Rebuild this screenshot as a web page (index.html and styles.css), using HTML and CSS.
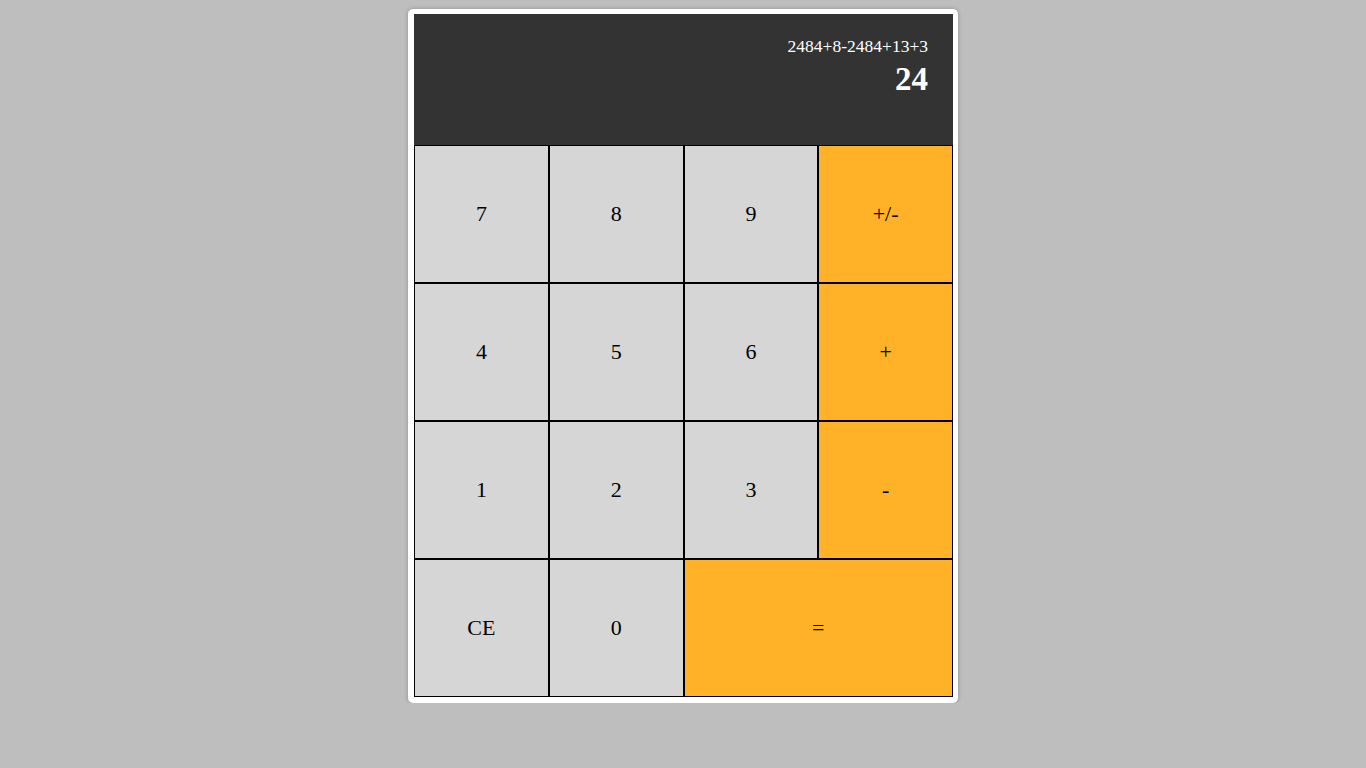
FILE: index.html
```html
<!DOCTYPE html>
<html>
<head>
<meta charset="utf-8">
<title>Calculator</title>
<link rel="stylesheet" href="styles.css">
</head>
<body>
<div class="calculator">
  <div class="display">
    <div class="expression">2484+8-2484+13+3</div>
    <div class="result">24</div>
  </div>
  <div class="keys">
    <button class="key">7</button>
    <button class="key">8</button>
    <button class="key">9</button>
    <button class="key op">+/-</button>
    <button class="key">4</button>
    <button class="key">5</button>
    <button class="key">6</button>
    <button class="key op">+</button>
    <button class="key">1</button>
    <button class="key">2</button>
    <button class="key">3</button>
    <button class="key op">-</button>
    <button class="key">CE</button>
    <button class="key">0</button>
    <button class="key op wide">=</button>
  </div>
</div>
</body>
</html>
```
FILE: styles.css
```css
html, body {
  margin: 0;
  padding: 0;
}
body {
  background: #bebebe;
  font-family: "Liberation Serif", "Times New Roman", serif;
  padding-top: 9px;
}
.calculator {
  width: 539px;
  margin: 0 auto;
  padding: 5px 5px 6px 6px;
  background: #ffffff;
  border-radius: 5px;
  box-shadow: 0 0 4px rgba(0, 0, 0, 0.25);
}
.display {
  height: 131px;
  box-sizing: border-box;
  background: #333333;
  color: #ffffff;
  display: flex;
  flex-direction: column;
  align-items: flex-end;
  padding: 22px 25px 0 0;
}
.expression {
  font-size: 17.5px;
}
.result {
  font-size: 33px;
  font-weight: bold;
  margin-top: 4px;
}
.keys {
  display: grid;
  grid-template-columns: repeat(4, 1fr);
  grid-auto-rows: 138px;
}
.key {
  margin: 0;
  border: 1px solid #000000;
  border-radius: 0;
  background: #d6d6d6;
  color: #000000;
  font-family: "Liberation Serif", "Times New Roman", serif;
  font-size: 22px;
  padding: 0;
}
.key.op {
  background: #ffb127;
}
.key.wide {
  grid-column: span 2;
}
```
